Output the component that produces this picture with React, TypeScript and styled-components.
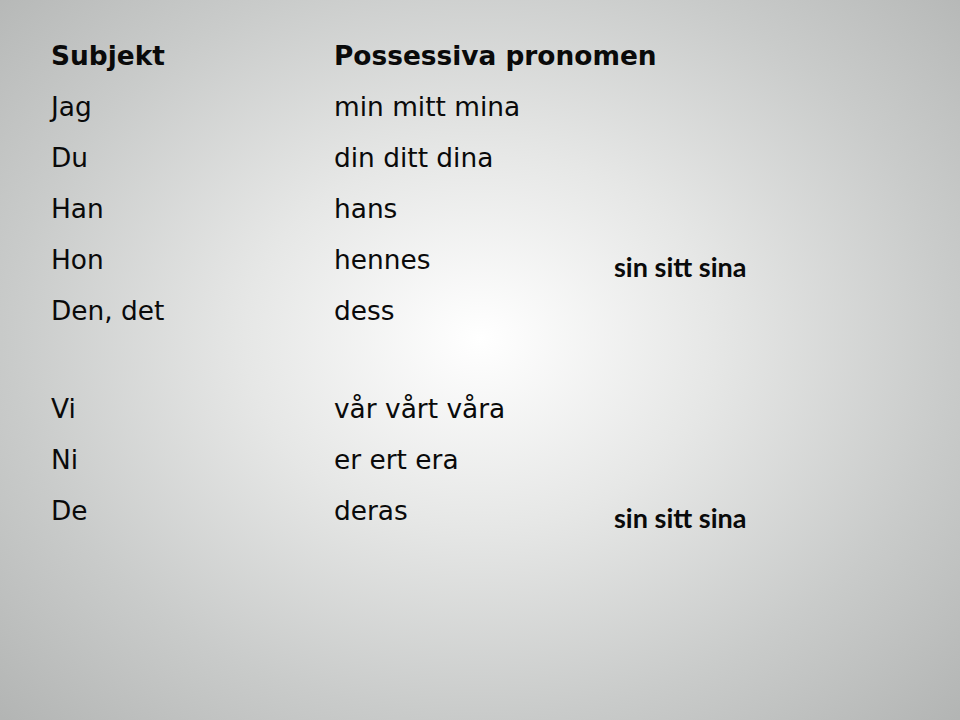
import React from "react";
import styled, { createGlobalStyle } from "styled-components";

const GlobalStyle = createGlobalStyle`
  html, body {
    margin: 0;
    padding: 0;
  }
`;

const Slide = styled.div`
  width: 960px;
  height: 720px;
  box-sizing: border-box;
  padding: 37px 0 0 51px;
  background: radial-gradient(
    ellipse 70% 75% at 50% 47%,
    #ffffff 0%,
    #e6e7e6 35%,
    #c9cbca 70%,
    #b3b5b4 100%
  );
  font-family: "DejaVu Sans", Verdana, sans-serif;
  color: #0a0a0a;
  overflow: hidden;
`;

const Table = styled.div<{ $gap?: number }>`
  display: grid;
  grid-template-columns: 283px 280px 1fr;
  grid-auto-rows: 51px;
  margin-top: ${(p) => p.$gap ?? 0}px;
`;

const Cell = styled.div<{ $bold?: boolean }>`
  font-size: 26.4px;
  font-weight: ${(p) => (p.$bold ? 700 : 400)};
  line-height: 38px;
  white-space: nowrap;
`;

const Reflexive = styled.div`
  font-family: Lato, "Open Sans", sans-serif;
  font-weight: 700;
  font-size: 27px;
  line-height: 38px;
  padding-top: 7px;
  white-space: nowrap;
`;

interface Row {
  subject: string;
  possessive: string;
  reflexive?: boolean;
}

const singular: Row[] = [
  { subject: "Jag", possessive: "min mitt mina" },
  { subject: "Du", possessive: "din ditt dina" },
  { subject: "Han", possessive: "hans" },
  { subject: "Hon", possessive: "hennes", reflexive: true },
  { subject: "Den, det", possessive: "dess" },
];

const plural: Row[] = [
  { subject: "Vi", possessive: "vår vårt våra" },
  { subject: "Ni", possessive: "er ert era" },
  { subject: "De", possessive: "deras", reflexive: true },
];

const renderRow = (row: Row) => (
  <React.Fragment key={row.subject}>
    <Cell>{row.subject}</Cell>
    <Cell>{row.possessive}</Cell>
    {row.reflexive ? <Reflexive>sin sitt sina</Reflexive> : <div />}
  </React.Fragment>
);

const App: React.FC = () => {
  return (
    <>
      <GlobalStyle />
      <Slide>
        <Table>
          <Cell $bold>Subjekt</Cell>
          <Cell $bold>Possessiva pronomen</Cell>
          <div />
          {singular.map(renderRow)}
        </Table>
        <Table $gap={47}>{plural.map(renderRow)}</Table>
      </Slide>
    </>
  );
};

export default App;
